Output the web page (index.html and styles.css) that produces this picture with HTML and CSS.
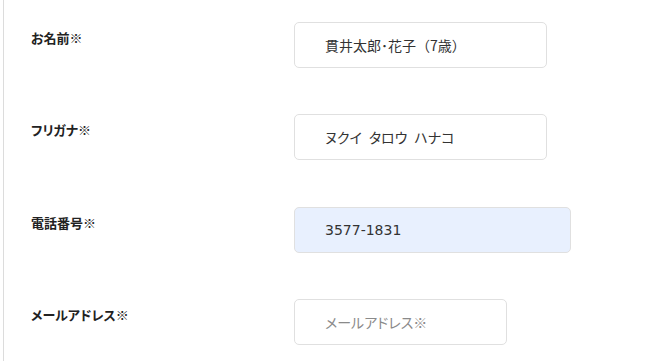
FILE: index.html
```html
<!DOCTYPE html>
<html lang="ja">
<head>
    <meta charset="UTF-8">
    <meta name="viewport" content="width=device-width, initial-scale=1.0">
    <title>お問い合わせフォーム</title>
    <link rel="stylesheet" href="styles.css">
</head>
<body>
    <div class="form-wrap">
        <form class="entry-form">
            <div class="form-row">
                <label class="form-label" for="name">お名前※</label>
                <input class="form-input input-md no-palt" id="name" type="text" value="貫井太郎･花子（7歳）">
            </div>
            <div class="form-row">
                <label class="form-label" for="kana">フリガナ※</label>
                <input class="form-input input-md" id="kana" type="text" value="ヌクイ&#8194;タロウ&#8194;ハナコ">
            </div>
            <div class="form-row">
                <label class="form-label" for="tel">電話番号※</label>
                <input class="form-input input-lg autofilled num" id="tel" type="tel" value="3577-1831">
            </div>
            <div class="form-row">
                <label class="form-label" for="mail">メールアドレス※</label>
                <input class="form-input input-sm" id="mail" type="email" placeholder="メールアドレス※">
            </div>
        </form>
    </div>
</body>
</html>
```

FILE: styles.css
```css
/* General Styles */
body {
    font-family: "Noto Sans CJK JP", "Noto Sans", sans-serif;
    margin: 0;
    padding: 0;
    background: #fff;
    color: #333;
    font-feature-settings: "palt";
}

.form-wrap {
    margin-left: 3px;
    border-left: 1px solid #dcdcdc;
    min-height: 361px;
    padding: 22px 0 0 27px;
    box-sizing: border-box;
}

.entry-form {
    display: flex;
    flex-direction: column;
    gap: 46.4px;
}

.form-row {
    display: grid;
    grid-template-columns: 263px auto;
    align-items: start;
}

.form-label {
    padding-top: 6px;
    font-size: 13px;
    font-weight: bold;
    color: #222;
    line-height: 20px;
}

.form-input {
    height: 46px;
    box-sizing: border-box;
    border: 1px solid #e0e0e0;
    border-radius: 5px;
    padding: 0 0 0 30px;
    font-family: inherit;
    font-size: 14px;
    color: #333;
    background: #fff;
    outline: none;
    font-feature-settings: "palt";
}

.form-input::placeholder {
    color: #8a8a8a;
}

.no-palt {
    font-feature-settings: normal;
}

/* phone digits look wider, like Verdana */
.num {
    font-family: "DejaVu Sans", sans-serif;
}

.input-md {
    width: 253px;
}

.input-lg {
    width: 277px;
}

.input-sm {
    width: 213px;
}

.autofilled {
    background: #e8f0fe;
}
```
